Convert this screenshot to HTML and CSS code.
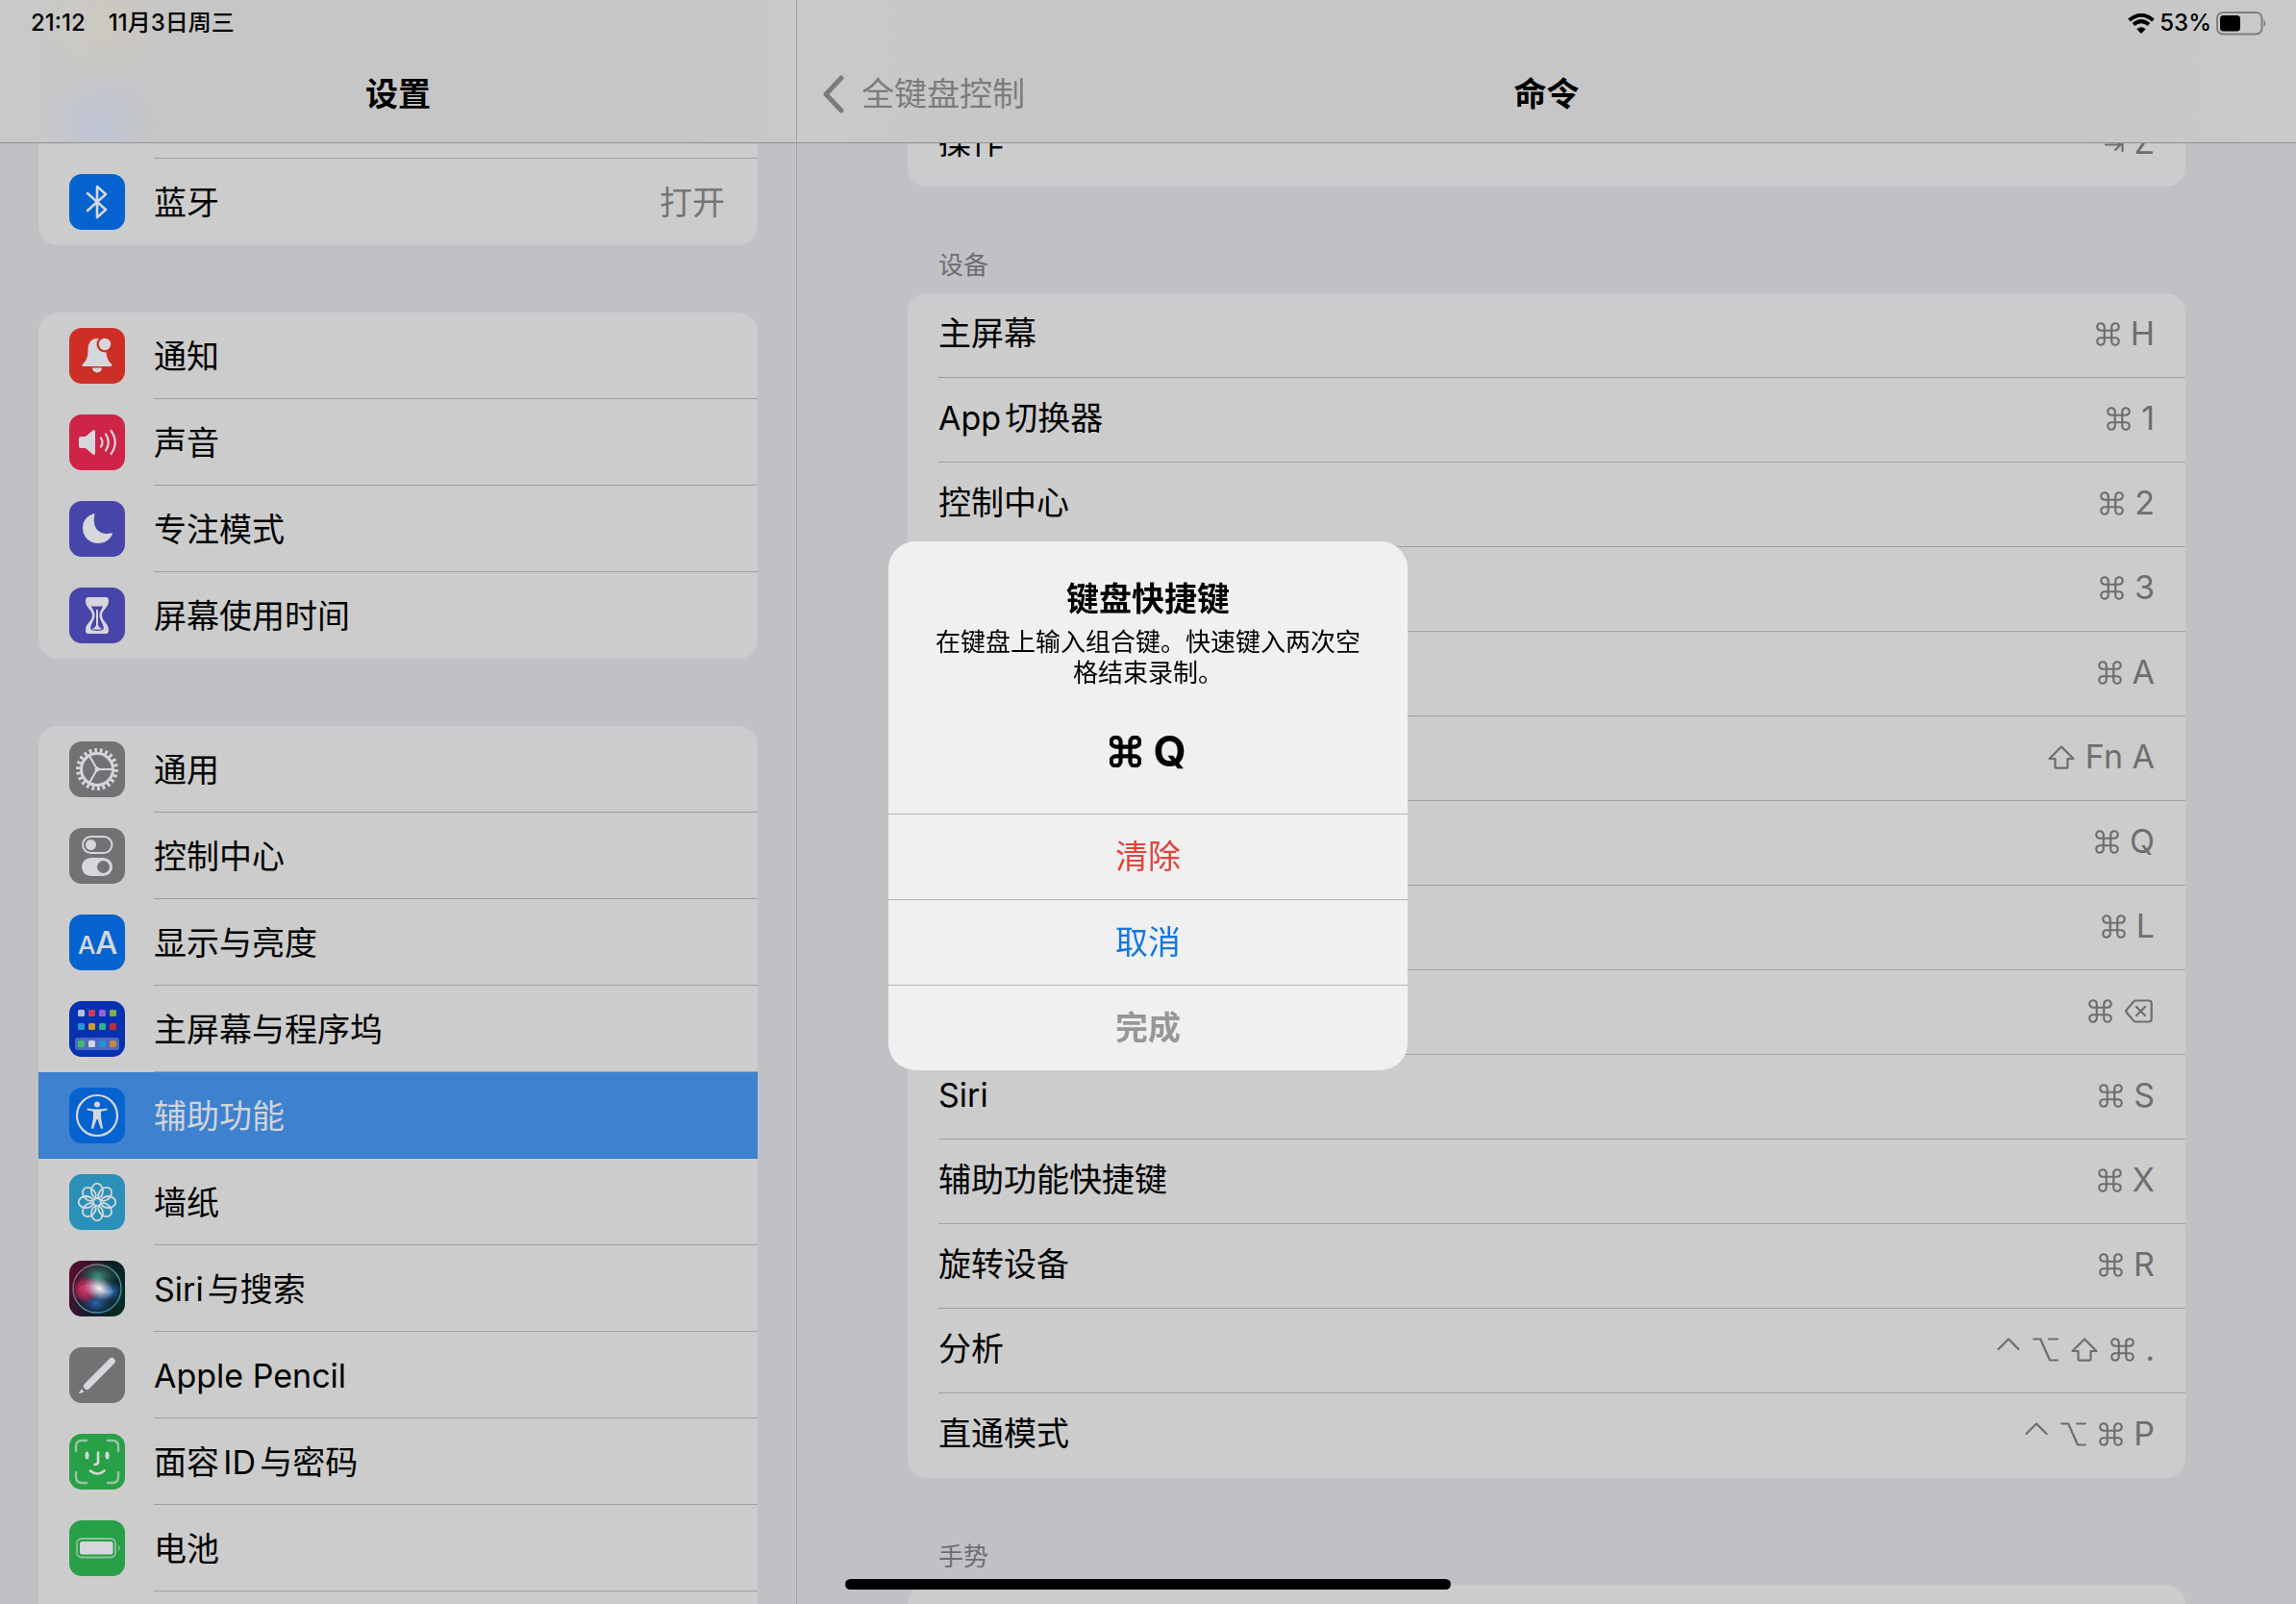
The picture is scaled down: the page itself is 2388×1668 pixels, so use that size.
FILE: index.html
```html
<!DOCTYPE html>
<html lang="zh-CN">
<head>
    <meta charset="UTF-8">
    <meta name="viewport" content="width=device-width, initial-scale=1.0">
    <title>设置</title>
    <link rel="stylesheet" href="styles.css">
</head>
<body>
    <!-- keyboard symbols, reused in the shortcut column -->
    <svg class="symbols" aria-hidden="true">
        <symbol id="cmd" viewBox="0 0 25 25"><path d="M20 1.25A3.75 3.75 0 0 0 16.25 5V20A3.75 3.75 0 1 0 20 16.25H5A3.75 3.75 0 1 0 8.75 20V5A3.75 3.75 0 1 0 5 8.75H20A3.75 3.75 0 0 0 20 1.25Z"/></symbol>
        <symbol id="shift" viewBox="0 0 28 25"><path d="M14 1.5L26.5 14H20.5V22.5Q20.5 23.7 19.3 23.7H8.7Q7.5 23.7 7.5 22.5V14H1.5Z"/></symbol>
        <symbol id="option" viewBox="0 0 27 25"><path d="M1.2 1.5H8.2L18 23.5H25.8M17 1.5H25.8"/></symbol>
        <symbol id="control" viewBox="0 0 24 25"><path d="M1.5 12L12 1.5L22.5 12"/></symbol>
        <symbol id="delete" viewBox="0 0 29 25"><path d="M11 1.5H25Q27.7 1.5 27.7 4.2V20.8Q27.7 23.5 25 23.5H11Q10 23.5 9.2 22.6L1.5 13.5Q.8 12.5 1.5 11.5L9.2 2.4Q10 1.5 11 1.5ZM12 8L21 17M21 8L12 17"/></symbol>
        <symbol id="tab" viewBox="0 0 20 25"><path d="M1 14.5H16M11 9L16.5 14.5L11 20M18.5 8V21"/></symbol>
    </svg>

    <div class="app">
        <aside class="pane sidebar">
            <header class="header">
                <div class="status"><span>21:12</span><span>11月3日周三</span></div>
                <div class="nav"><h1>设置</h1></div>
            </header>
            <nav class="scroll">
                <div class="group first">
                    <a class="row" href="#">
                        <svg class="icon blue" viewBox="0 0 58 58"></svg>
                        <span class="content"></span>
                    </a>
                    <a class="row" href="#">
                        <svg class="icon blue" viewBox="0 0 58 58"><path class="line" stroke-width="2.6" d="M19 20L38 37L29 45V13L38 21L19 38"/></svg>
                        <span class="content">蓝牙<span class="value">打开</span></span>
                    </a>
                </div>

                <div class="group">
                    <a class="row" href="#">
                        <svg class="icon red" viewBox="0 0 58 58">
                            <path d="M29 11C22 11 19.5 17 19.5 23C19.5 30 18 34 14 37.5Q12.5 40 15 40H43Q45.5 40 44 37.5C40 34 38.5 30 38.5 23C38.5 17 36 11 29 11ZM24 41.5H34A5 5 0 0 1 24 41.5Z"/>
                            <circle class="cut" cx="37" cy="17" r="8.5"/><circle cx="37" cy="17" r="6.2"/>
                        </svg>
                        <span class="content">通知</span>
                    </a>
                    <a class="row" href="#">
                        <svg class="icon pink" viewBox="0 0 58 58">
                            <path d="M10 25Q10 23 12 23H17L24.5 16.5Q27 15 27 18V40Q27 43 24.5 41.5L17 35H12Q10 35 10 33Z"/>
                            <path class="line" stroke-width="2.2" d="M33 24.5Q36 29 33 33.5M38 20.5Q43.5 29 38 37.5M43.5 17Q52 29 43.5 41"/>
                        </svg>
                        <span class="content">声音</span>
                    </a>
                    <a class="row" href="#">
                        <svg class="icon indigo" viewBox="0 0 58 58"><path d="M26 13C18 15 14 21 14 28C14 37 21 44 30 44C37 44 43 40 45 34Q45 33 44 33.3C32 36.5 23 28 26.5 14Q26.7 12.8 26 13Z"/></svg>
                        <span class="content">专注模式</span>
                    </a>
                    <a class="row" href="#">
                        <svg class="icon indigo" viewBox="0 0 58 58">
                            <path d="M19.5 10H38.5Q41 10 41 14C41 21 34 23 34 29S41 37 41 44Q41 48 38.5 48H19.5Q17 48 17 44C17 37 24 35 24 29S17 21 17 14Q17 10 19.5 10Z"/>
                            <path class="cut" d="M23 19.5H35C34 23 31.5 24 31.5 29S35 36 36 43C34 45.5 24 45.5 22 43C23 36 26.5 34 26.5 29S24 23 23 19.5Z"/>
                            <path d="M28 23H30V39Q31 42 35 43Q29 44.5 23 43Q27 42 28 39Z"/>
                        </svg>
                        <span class="content">屏幕使用时间</span>
                    </a>
                </div>

                <div class="group">
                    <a class="row" href="#">
                        <svg class="icon gray" viewBox="0 0 58 58">
                            <circle class="line" cx="29" cy="29" r="16.5" stroke-width="3"/>
                            <circle class="line teeth" cx="29" cy="29" r="19.8" stroke-width="4.4" pathLength="44"/>
                            <path class="line" stroke-width="2" d="M29 29H45M29 29L21 15M29 29L21 43"/>
                            <circle cx="29" cy="29" r="2.5"/>
                        </svg>
                        <span class="content">通用</span>
                    </a>
                    <a class="row" href="#">
                        <svg class="icon gray" viewBox="0 0 58 58">
                            <rect class="line" x="14" y="9" width="30.5" height="17" rx="8.5" stroke-width="2"/><circle cx="22.5" cy="17.5" r="5.5"/>
                            <rect x="13" y="31" width="32" height="19" rx="9.5"/><circle class="cut" cx="35.5" cy="40.5" r="6.5"/>
                        </svg>
                        <span class="content">控制中心</span>
                    </a>
                    <a class="row" href="#">
                        <svg class="icon blue" viewBox="0 0 58 58"><text x="9" y="41" font-size="26">A</text><text x="27" y="41" font-size="33">A</text></svg>
                        <span class="content">显示与亮度</span>
                    </a>
                    <a class="row" href="#">
                        <svg class="icon navy" viewBox="0 0 58 58">
                            <rect x="6" y="38" width="46" height="13" rx="3" opacity=".35"/>
                            <rect x="9" y="9" width="7" height="7" rx="1.5" fill="#b9c0d2"/><rect x="20" y="9" width="7" height="7" rx="1.5" fill="#cf3a58"/><rect x="31" y="9" width="7" height="7" rx="1.5" fill="#9a5fd6"/><rect x="42" y="9" width="7" height="7" rx="1.5" fill="#7fae45"/>
                            <rect x="9" y="23" width="7" height="7" rx="1.5" fill="#2496d4"/><rect x="20" y="23" width="7" height="7" rx="1.5" fill="#d09a2e"/><rect x="31" y="23" width="7" height="7" rx="1.5" fill="#2eb18c"/><rect x="42" y="23" width="7" height="7" rx="1.5" fill="#c22f38"/>
                            <rect x="9" y="41" width="7" height="7" rx="1.5" fill="#44bb67"/><rect x="20" y="41" width="7" height="7" rx="1.5" fill="#d3d6de"/><rect x="31" y="41" width="7" height="7" rx="1.5" fill="#2496cf"/><rect x="42" y="41" width="7" height="7" rx="1.5" fill="#c98543"/>
                        </svg>
                        <span class="content">主屏幕与程序坞</span>
                    </a>
                    <a class="row selected" href="#" aria-current="page">
                        <svg class="icon blue" viewBox="0 0 58 58">
                            <circle class="line" cx="29" cy="29" r="21" stroke-width="2.2"/>
                            <circle cx="29" cy="17.5" r="3"/>
                            <path d="M19 21.5Q29 23.5 39 21.5Q40.5 22.5 39 23.5L33 24.8V31L35 42Q34 43.8 32.8 42.2L29.5 33H28.5L25.2 42.2Q24 43.8 23 42L25 31V24.8L19 23.5Q17.5 22.5 19 21.5Z"/>
                        </svg>
                        <span class="content">辅助功能</span>
                    </a>
                    <a class="row" href="#">
                        <svg class="icon cyan" viewBox="0 0 58 58">
                            <g class="line" stroke-width="1.8">
                                <ellipse cx="29" cy="17.5" rx="6" ry="7.8"/>
                                <ellipse cx="29" cy="17.5" rx="6" ry="7.8" transform="rotate(45 29 29)"/>
                                <ellipse cx="29" cy="17.5" rx="6" ry="7.8" transform="rotate(90 29 29)"/>
                                <ellipse cx="29" cy="17.5" rx="6" ry="7.8" transform="rotate(135 29 29)"/>
                                <ellipse cx="29" cy="17.5" rx="6" ry="7.8" transform="rotate(180 29 29)"/>
                                <ellipse cx="29" cy="17.5" rx="6" ry="7.8" transform="rotate(225 29 29)"/>
                                <ellipse cx="29" cy="17.5" rx="6" ry="7.8" transform="rotate(270 29 29)"/>
                                <ellipse cx="29" cy="17.5" rx="6" ry="7.8" transform="rotate(315 29 29)"/>
                            </g>
                        </svg>
                        <span class="content">墙纸</span>
                    </a>
                    <a class="row" href="#">
                        <svg class="icon siri" viewBox="0 0 58 58">
                            <defs>
                                <linearGradient id="orb-ring" x1="0" y1="0" x2="1" y2="1"><stop offset="0" stop-color="#b0507a"/><stop offset=".5" stop-color="#4f9f8c"/><stop offset="1" stop-color="#3f7fc4"/></linearGradient>
                                <radialGradient id="orb-pink"><stop offset="0" stop-color="#d83a70"/><stop offset=".6" stop-color="#b52a58" stop-opacity=".8"/><stop offset="1" stop-color="#b52a58" stop-opacity="0"/></radialGradient>
                                <radialGradient id="orb-green"><stop offset="0" stop-color="#3b8f78"/><stop offset="1" stop-color="#2a7560" stop-opacity="0"/></radialGradient>
                                <radialGradient id="orb-blue"><stop offset="0" stop-color="#2f7fd0"/><stop offset="1" stop-color="#1f4a98" stop-opacity="0"/></radialGradient>
                                <radialGradient id="orb-white"><stop offset="0" stop-color="#f0f2f6"/><stop offset=".35" stop-color="#d8d8e4" stop-opacity=".8"/><stop offset="1" stop-color="#c8c8dc" stop-opacity="0"/></radialGradient>
                            </defs>
                            <ellipse cx="30" cy="16" rx="21" ry="15" fill="url(#orb-green)"/>
                            <ellipse cx="42" cy="32" rx="14" ry="12" fill="url(#orb-blue)"/>
                            <ellipse cx="28" cy="44" rx="18" ry="13" fill="url(#orb-blue)" opacity=".8"/>
                            <circle cx="17" cy="30" r="14" fill="url(#orb-pink)"/>
                            <path d="M6 33Q18 18 32 28T52 24Q44 42 32 31T6 33Z" fill="url(#orb-white)" opacity=".6"/>
                            <ellipse cx="31" cy="29" rx="16" ry="12" fill="url(#orb-white)" transform="rotate(25 31 29)"/>
                            <circle cx="29" cy="29" r="25" fill="none" stroke="url(#orb-ring)" stroke-width="1.3"/>
                        </svg>
                        <span class="content">Siri与搜索</span>
                    </a>
                    <a class="row" href="#">
                        <svg class="icon gray" viewBox="0 0 58 58"><path class="line" stroke-width="7" d="M18.5 40.5L44.3 14.5"/><path d="M13 43.5L15.5 46.5L11 48Q9.7 48 10.2 47Z"/></svg>
                        <span class="content">Apple Pencil</span>
                    </a>
                    <a class="row" href="#">
                        <svg class="icon green" viewBox="0 0 58 58">
                            <path class="line" stroke-width="2.4" opacity=".65" d="M7 18V13Q7 7 13 7H18M40 7H45Q51 7 51 13V18M51 40V45Q51 51 45 51H40M18 51H13Q7 51 7 45V40"/>
                            <ellipse cx="18.5" cy="22.5" rx="2" ry="4"/><ellipse cx="39.5" cy="22.5" rx="2" ry="4"/>
                            <path class="line" stroke-width="2.6" d="M30 19.5V29Q30 32 26.5 32M22 38.5Q29 44.5 36.5 38.5"/>
                        </svg>
                        <span class="content">面容ID与密码</span>
                    </a>
                    <a class="row" href="#">
                        <svg class="icon green" viewBox="0 0 58 58">
                            <rect class="line" x="8" y="19" width="40" height="19.5" rx="5" stroke-width="1.8" opacity=".6"/>
                            <rect x="11" y="22" width="34.5" height="13.5" rx="2.5"/>
                            <path opacity=".6" d="M51 25.5Q54.5 28.7 51 32Z"/>
                        </svg>
                        <span class="content">电池</span>
                    </a>
                    <a class="row" href="#">
                        <svg class="icon blue" viewBox="0 0 58 58"></svg>
                        <span class="content"></span>
                    </a>
                </div>
            </nav>
        </aside>

        <main class="pane detail">
            <header class="header">
                <div class="status end">
                    <svg width="28" height="21" viewBox="0 0 28 21" aria-label="Wi-Fi"><path d="M14 21L9.3 16.2Q14 12.3 18.7 16.2Z"/><path class="arc" d="M6 11.5Q14 4.8 22 11.5"/><path class="arc" d="M1.5 7Q14 -3.5 26.5 7"/></svg>
                    <span>53%</span>
                    <svg width="54" height="25" viewBox="0 0 54 25" aria-label="电池"><rect class="shell" x="1" y="1" width="46.5" height="22.5" rx="6"/><rect x="4" y="4" width="21" height="16.5" rx="3.5"/><path class="tip" d="M49.5 8Q53.5 12.2 49.5 16.5Z"/></svg>
                </div>
                <div class="nav">
                    <a class="back" href="#"><svg width="24" height="40" viewBox="0 0 24 40" aria-hidden="true"><path d="M20 3L4 20L20 37"/></svg>全键盘控制</a>
                    <h2>命令</h2>
                </div>
            </header>
            <div class="scroll">
                <section class="commands cut-off">
                    <button class="command">操作<span class="keys"><svg width="20" height="25"><use href="#tab"/></svg>Z</span></button>
                </section>

                <h3 class="caption">设备</h3>
                <section class="commands">
                    <button class="command">主屏幕<span class="keys"><svg width="25" height="25"><use href="#cmd"/></svg>H</span></button>
                    <button class="command">App切换器<span class="keys"><svg width="25" height="25"><use href="#cmd"/></svg>1</span></button>
                    <button class="command">控制中心<span class="keys"><svg width="25" height="25"><use href="#cmd"/></svg>2</span></button>
                    <button class="command"><span class="keys"><svg width="25" height="25"><use href="#cmd"/></svg>3</span></button>
                    <button class="command"><span class="keys"><svg width="25" height="25"><use href="#cmd"/></svg>A</span></button>
                    <button class="command"><span class="keys"><svg width="28" height="25"><use href="#shift"/></svg>Fn A</span></button>
                    <button class="command"><span class="keys"><svg width="25" height="25"><use href="#cmd"/></svg>Q</span></button>
                    <button class="command"><span class="keys"><svg width="25" height="25"><use href="#cmd"/></svg>L</span></button>
                    <button class="command"><span class="keys"><svg width="25" height="25"><use href="#cmd"/></svg><svg width="29" height="25"><use href="#delete"/></svg></span></button>
                    <button class="command">Siri<span class="keys"><svg width="25" height="25"><use href="#cmd"/></svg>S</span></button>
                    <button class="command">辅助功能快捷键<span class="keys"><svg width="25" height="25"><use href="#cmd"/></svg>X</span></button>
                    <button class="command">旋转设备<span class="keys"><svg width="25" height="25"><use href="#cmd"/></svg>R</span></button>
                    <button class="command">分析<span class="keys"><svg width="24" height="25"><use href="#control"/></svg><svg width="27" height="25"><use href="#option"/></svg><svg width="28" height="25"><use href="#shift"/></svg><svg width="25" height="25"><use href="#cmd"/></svg>.</span></button>
                    <button class="command">直通模式<span class="keys"><svg width="24" height="25"><use href="#control"/></svg><svg width="27" height="25"><use href="#option"/></svg><svg width="25" height="25"><use href="#cmd"/></svg>P</span></button>
                </section>

                <h3 class="caption">手势</h3>
                <section class="commands">
                    <button class="command"></button>
                </section>
            </div>
        </main>
    </div>

    <div class="overlay">
        <div class="alert" role="alertdialog" aria-labelledby="alert-title">
            <div class="message">
                <h2 id="alert-title">键盘快捷键</h2>
                <p>在键盘上输入组合键。快速键入两次空格结束录制。</p>
                <div class="combo"><svg width="33" height="33"><use href="#cmd"/></svg>Q</div>
            </div>
            <button class="clear">清除</button>
            <button class="cancel">取消</button>
            <button class="done" disabled>完成</button>
        </div>
    </div>
    <div class="home-bar"></div>
</body>
</html>
```
FILE: styles.css
```css
* {
    box-sizing: border-box;
}
body {
    margin: 0;
    font-family: Inter, "Noto Sans CJK SC", sans-serif;
    font-size: 34px;
    line-height: 40px;
    color: #000;
    background: #c1c0c5;
    text-autospace: normal;
}
h1, h2, h3, p {
    margin: 0;
    font-size: inherit;
}
a {
    color: inherit;
    text-decoration: none;
}
button {
    border: 0;
    padding: 0;
    background: none;
    font: inherit;
    color: inherit;
    text-align: left;
}
.symbols {
    display: none;
}

/* two panes */
.app {
    display: flex;
    height: 100vh;
    overflow: hidden;
}
.pane {
    display: flex;
    flex-direction: column;
    min-width: 0;
}
.sidebar {
    width: 829px;
    flex-shrink: 0;
    border-right: 1px solid #a4a4a7;
}
.detail {
    flex: 1;
}
.scroll {
    flex: 1;
    min-height: 0;
    overflow: hidden;
}

/* header */
.header {
    flex-shrink: 0;
    border-bottom: 1px solid #8f8f92;
    background: linear-gradient(90deg, #cacacd 0, #c9c9cb 60px, #c6c6c6 220px, #c6c6c6 calc(100% - 240px), #cacacc 100%);
}
.sidebar .header {
    background:
        radial-gradient(circle at 104px 130px, rgba(184, 194, 220, .6), transparent 60px),
        radial-gradient(circle at 105px 24px, rgba(208, 202, 186, .6), transparent 75px),
        linear-gradient(90deg, #c9c9ca, #c6c6c6 160px, #c6c6c6 700px, #c9c9ca);
}
.status {
    display: flex;
    align-items: center;
    gap: 24px;
    height: 48px;
    padding: 0 32px;
    font-size: 24px;
    font-weight: 500;
    text-autospace: no-autospace;
}
.status.end {
    justify-content: flex-end;
    gap: 5px;
    padding: 0 29px;
}
.status .arc {
    fill: none;
    stroke: #000;
    stroke-width: 4;
}
.status .shell {
    fill: none;
    stroke: #808082;
    stroke-width: 2;
}
.status .tip {
    fill: #808082;
}
.nav {
    display: grid;
    grid-template-columns: 1fr auto 1fr;
    align-items: center;
    height: 100px;
}
.nav h1, .nav h2 {
    grid-column: 2;
    font-weight: 700;
}
.back {
    grid-column: 1;
    display: flex;
    align-items: center;
    gap: 17px;
    padding-left: 26px;
    color: #7c7c7e;
}
.back path {
    fill: none;
    stroke: currentColor;
    stroke-width: 5;
    stroke-linecap: round;
    stroke-linejoin: round;
}

/* sidebar list */
.group {
    margin: 0 40px 70px;
    border-radius: 20px;
    background: #ccc;
    overflow: hidden;
}
.group.first {
    margin-top: -74px;
}
.row {
    display: flex;
    align-items: center;
    gap: 30px;
    height: 90px;
    padding-left: 32px;
}
.content {
    flex: 1;
    display: flex;
    align-items: center;
    justify-content: space-between;
    height: 90px;
    padding: 2px 34px 0 0;
    border-bottom: 1px solid #a0a0a2;
}
.row:last-child .content {
    border-bottom-color: transparent;
}
.row.selected {
    background: #3e82cf;
    color: #cfd3da;
}
.row.selected .content {
    border-color: transparent;
}
.value {
    color: #757577;
}
.icon {
    width: 58px;
    height: 58px;
    border-radius: 13px;
    background: var(--tile);
    fill: #d6d7da;
    font-weight: 500;
}
.icon .line {
    fill: none;
    stroke: #d6d7da;
    stroke-linecap: round;
    stroke-linejoin: round;
}
.icon .cut {
    fill: var(--tile);
}
.icon .teeth {
    stroke-dasharray: 1 1;
    stroke-linecap: butt;
}
.blue { --tile: #0563cf; }
.red { --tile: #cd2f27; }
.pink { --tile: #cd2448; }
.indigo { --tile: #4845aa; }
.gray { --tile: #727275; }
.navy { --tile: #0631b1; }
.cyan { --tile: #2b90b7; }
.green { --tile: #28a047; }
.siri { --tile: linear-gradient(110deg, #5a0d30 5%, #151c2c 50%, #062b22 90%); }

/* commands */
.commands {
    margin: 0 115px;
    border-radius: 20px;
    background: #ccc;
    overflow: hidden;
}
.commands.cut-off {
    margin-top: -43px;
}
.caption {
    height: 111px;
    margin: 0 147px;
    padding-top: 62px;
    font-size: 26px;
    font-weight: 400;
    color: #6e6e72;
}
.command {
    display: flex;
    align-items: center;
    justify-content: space-between;
    width: calc(100% - 32px);
    height: 88px;
    margin-left: 32px;
    padding: 0 32px 3px 0;
    border-bottom: 1px solid #a0a0a2;
}
.command:last-child {
    border-bottom-color: transparent;
}
.keys {
    display: flex;
    align-items: center;
    gap: 9px;
    margin-left: auto;
    color: #6e6e70;
}
.keys svg {
    margin: 0 2px;
}
.keys svg, .combo svg {
    fill: none;
    stroke: currentColor;
    stroke-width: 2.2px;
    stroke-linecap: round;
    stroke-linejoin: round;
}

/* alert */
.overlay {
    position: fixed;
    inset: 8px 0 0;
    display: flex;
    align-items: center;
    justify-content: center;
}
.alert {
    display: flex;
    flex-direction: column;
    width: 540px;
    border-radius: 28px;
    background: #f0f0f1;
    overflow: hidden;
    text-align: center;
}
.message {
    padding: 40px 42px;
}
.message h2 {
    font-weight: 700;
}
.message p {
    margin-top: 9px;
    font-size: 26px;
    line-height: 32px;
}
.combo {
    display: flex;
    align-items: center;
    justify-content: center;
    gap: 12px;
    margin-top: 40px;
    font-size: 44px;
    line-height: 50px;
    font-weight: 700;
}
.combo svg {
    stroke-width: 3.2px;
}
.alert button {
    height: 89px;
    border-top: 1px solid #b4b4b6;
    text-align: center;
}
.alert .clear {
    color: #e2443d;
}
.alert .cancel {
    color: #1377e2;
}
.alert .done {
    font-weight: 700;
    color: #979797;
}

/* home indicator */
.home-bar {
    position: fixed;
    left: 50%;
    bottom: 15px;
    width: 630px;
    height: 11px;
    margin-left: -315px;
    border-radius: 6px;
    background: #000;
}
```
